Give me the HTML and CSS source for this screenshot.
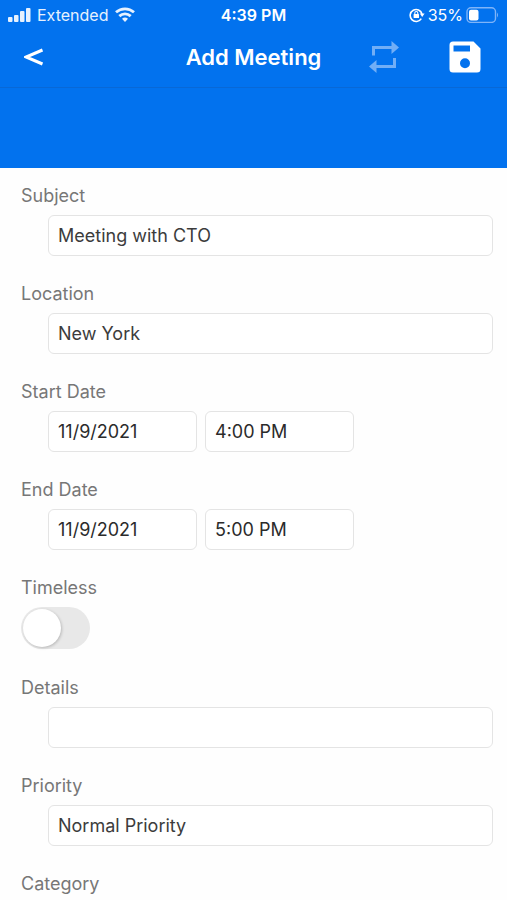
FILE: index.html
```html
<!DOCTYPE html>
<html lang="en">
<head>
<meta charset="utf-8">
<meta name="viewport" content="width=device-width, initial-scale=1">
<title>Add Meeting</title>
<link rel="stylesheet" href="styles.css">
</head>
<body>
<header class="header">
  <div class="status">
    <div class="status-left">
      <svg width="24" height="16" viewBox="0 0 24 16" fill="currentColor" aria-hidden="true">
        <rect x="0" y="10" width="4.500" height="5" rx="1"/><rect x="6" y="8" width="4.500" height="7" rx="1"/><rect x="12" y="4" width="4.500" height="11" rx="1"/><rect x="18" y="1" width="4.500" height="14" rx="1"/>
      </svg>
      <span class="carrier">Extended</span>
      <svg width="20" height="16" viewBox="0 0 20 16" fill="none" stroke="currentColor" stroke-width="2.8" aria-hidden="true">
        <path d="M1 5.3C6.2 .6 13.8 .6 19 5.3"/><path d="M4.3 9.1C7.6 6.1 12.4 6.1 15.7 9.1"/><path d="M7 11.7Q10 9.3 13 11.7L10 14.9Z" fill="currentColor" stroke="none"/>
      </svg>
    </div>
    <span class="time">4:39 PM</span>
    <div class="status-right">
      <svg width="16" height="16" viewBox="0 0 16 16" fill="none" stroke="currentColor" stroke-width="1.6" aria-hidden="true">
        <path d="M12.3 11.6A6 6 0 1 1 13 7"/><path d="M10.8 6.5H15.6L13.2 10Z" fill="currentColor" stroke="none"/><rect x="4.6" y="7" width="5.4" height="4" rx=".5" fill="currentColor" stroke="none"/><path d="M5.8 7.4V6a1.5 1.5 0 0 1 3 0V7.4" stroke-width="1.1"/>
      </svg>
      <span>35%</span>
      <svg width="33" height="16" viewBox="0 0 33 16" aria-hidden="true">
        <rect x="1" y=".8" width="28.5" height="14.6" rx="4" fill="none" stroke="#7fb4f8" stroke-width="1.4"/><rect x="3" y="2.8" width="9.5" height="10.6" rx="2" fill="#fff"/><path d="M31 5.5Q33 8 31 10.5Z" fill="#7fb4f8"/>
      </svg>
    </div>
  </div>
  <div class="toolbar">
    <button class="icon-button back" type="button" aria-label="Back">
      <svg width="20" height="18" viewBox="0 0 20 18" fill="none" stroke="currentColor" stroke-width="3" aria-hidden="true"><path d="M18.500 2L2 9L18.500 16"/></svg>
    </button>
    <h1 class="title">Add Meeting</h1>
    <div class="actions">
      <button class="icon-button repeat" type="button" aria-label="Repeat" disabled>
        <svg width="32" height="34" viewBox="0 0 32 34" aria-hidden="true"><path d="M4 15.5V6H23.5V1L31 7.5L23.5 14V9H7V15.5Z M28 18V28H8.500V33L1 26.500L8.500 20V25H25V18Z" fill="currentColor"/></svg>
      </button>
      <button class="icon-button save" type="submit" form="meeting" aria-label="Save">
        <svg width="32" height="32" viewBox="0 0 32 32" aria-hidden="true"><path fill="currentColor" fill-rule="evenodd" d="M4 .5H24.500L31.500 7.500V28A3.500 3.500 0 0 1 28 31.500H4A3.500 3.500 0 0 1 .5 28V4A3.500 3.500 0 0 1 4 .5ZM4.500 4.500V10.500H21V4.500ZM16 17.300A5 5 0 1 0 16 27.300A5 5 0 1 0 16 17.300Z"/></svg>
      </button>
    </div>
  </div>
  <div class="banner"></div>
</header>
<main class="content">
  <form class="form" id="meeting">
    <div class="group">
      <label class="label" for="subject">Subject</label>
      <div class="row"><input class="field" id="subject" type="text" value="Meeting with CTO"></div>
    </div>
    <div class="group">
      <label class="label" for="location">Location</label>
      <div class="row"><input class="field" id="location" type="text" value="New York"></div>
    </div>
    <div class="group">
      <label class="label" for="start-date">Start Date</label>
      <div class="row">
        <input class="field half" id="start-date" type="text" value="11/9/2021">
        <input class="field half" type="text" value="4:00 PM" aria-label="Start time">
      </div>
    </div>
    <div class="group">
      <label class="label" for="end-date">End Date</label>
      <div class="row">
        <input class="field half" id="end-date" type="text" value="11/9/2021">
        <input class="field half" type="text" value="5:00 PM" aria-label="End time">
      </div>
    </div>
    <div class="group">
      <label class="label" for="timeless">Timeless</label>
      <input class="switch" id="timeless" type="checkbox" role="switch">
    </div>
    <div class="group">
      <label class="label" for="details">Details</label>
      <div class="row"><input class="field" id="details" type="text"></div>
    </div>
    <div class="group">
      <label class="label" for="priority">Priority</label>
      <div class="row"><select class="field" id="priority"><option>Normal Priority</option></select></div>
    </div>
    <div class="group">
      <label class="label" for="category">Category</label>
      <div class="row"><select class="field" id="category"></select></div>
    </div>
  </form>
</main>
</body>
</html>
```
FILE: styles.css
```css
* {
  box-sizing: border-box;
}

body {
  margin: 0;
  height: 100vh;
  display: flex;
  flex-direction: column;
  overflow: hidden;
  background: #fefefe;
  color: #3c3c3c;
  font-family: Inter, "Liberation Sans", sans-serif;
  font-size: 18px;
}

.header {
  flex: none;
  background: #0272ee;
  color: #fff;
}

.status {
  display: grid;
  grid-template-columns: 1fr auto 1fr;
  align-items: center;
  height: 30px;
  padding: 0 8px;
  font-size: 16px;
}

.status-left,
.status-right {
  display: flex;
  align-items: center;
  gap: 5px;
}

.status-left {
  color: #e6f1fe;
}

.carrier {
  margin-right: 2px;
}

.status-right {
  justify-content: flex-end;
  gap: 3px;
}

.time {
  font-weight: 600;
}

.toolbar {
  display: grid;
  grid-template-columns: 1fr auto 1fr;
  align-items: center;
  height: 58px;
  padding: 0 24px 3px;
  border-bottom: 1px solid #0868d6;
}

.title {
  margin: 0;
  font-size: 22px;
  font-weight: 600;
}

.actions {
  display: flex;
  align-items: center;
  justify-content: flex-end;
  gap: 49px;
  padding-right: 2px;
}

.icon-button {
  display: flex;
  padding: 0;
  border: 0;
  background: none;
  color: #fff;
}

.back {
  justify-self: start;
}

.repeat {
  color: #71aef6;
}

.banner {
  height: 80px;
}

.content {
  flex: 1;
  min-height: 0;
  overflow-y: auto;
  scrollbar-width: none;
}

.form {
  display: flex;
  flex-direction: column;
  gap: 26px;
  padding: 16px 14px 26px 21px;
}

.group {
  display: flex;
  flex-direction: column;
  align-items: stretch;
  gap: 7px;
}

.label {
  align-self: flex-start;
  line-height: 24px;
  color: #777;
}

.row {
  display: flex;
  gap: 8px;
  padding-left: 27px;
}

.field {
  flex: 1;
  min-width: 0;
  height: 41px;
  padding: 0 9px;
  border: 1px solid #e4e4e4;
  border-radius: 6px;
  background: #fff;
  color: #3c3c3c;
  font: inherit;
  appearance: none;
}

.half {
  flex: 0 1 149px;
  color: #2b2b2b;
}

.switch {
  position: relative;
  appearance: none;
  width: 69px;
  height: 42px;
  margin: 0 0 1px;
  border-radius: 21px;
  background: #e8e8e8;
}

.switch::before {
  content: "";
  position: absolute;
  top: 2px;
  left: 2px;
  width: 38px;
  height: 38px;
  border-radius: 50%;
  background: #fff;
  box-shadow: 1px 1px 3px rgba(0, 0, 0, 0.2);
}

.switch:checked {
  background: #0272ee;
}

.switch:checked::before {
  left: 29px;
}
```
